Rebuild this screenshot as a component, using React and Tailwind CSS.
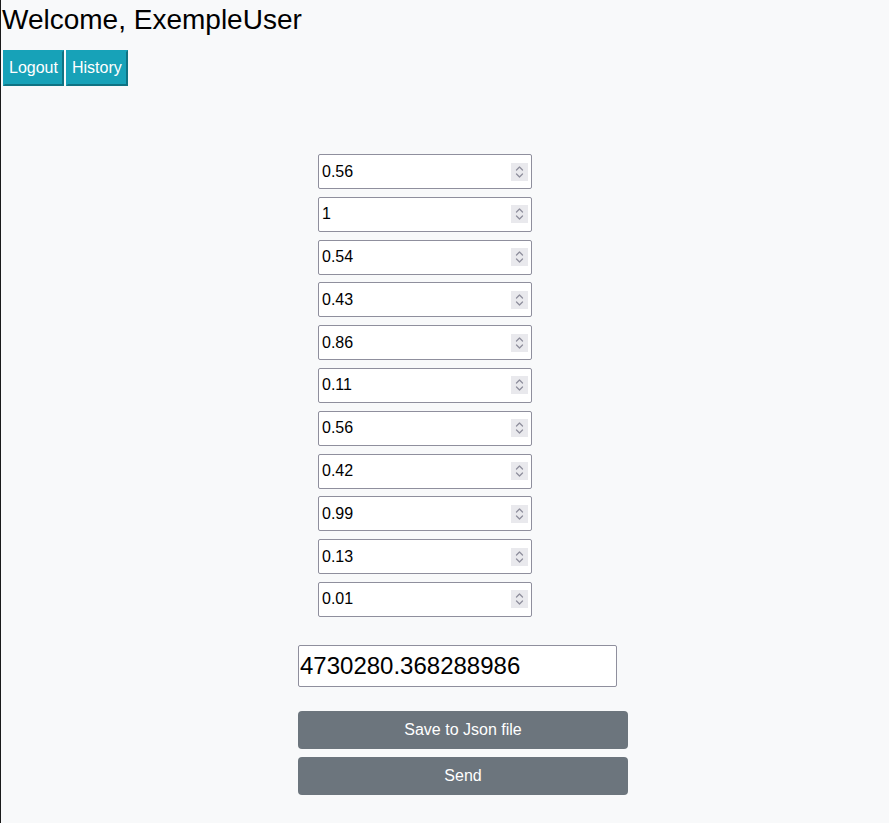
import { useState } from 'react'

const valeursInitiales = ['0.56', '1', '0.54', '0.43', '0.86', '0.11', '0.56', '0.42', '0.99', '0.13', '0.01']

function Spinner() {
  return (
    <span className="flex h-[18px] w-[17px] shrink-0 items-center justify-center bg-[#e9e9ed]">
      <svg width="9" height="14" viewBox="0 0 9 14" fill="none" stroke="#8f8f9d" strokeWidth="1.3" strokeLinecap="round" strokeLinejoin="round">
        <path d="M1.5 5 L4.5 2 L7.5 5" />
        <path d="M1.5 9 L4.5 12 L7.5 9" />
      </svg>
    </span>
  )
}

function ChampNombre({ valeur, onChange }) {
  return (
    <div className="mb-[7.8px] ml-[20px] flex h-[35px] w-[214px] items-center rounded-[2px] border border-[#8f8f9d] bg-white pr-[3px]">
      <input
        type="text"
        value={valeur}
        onChange={(e) => onChange(e.target.value)}
        className="min-w-0 flex-1 bg-transparent pl-[3px] text-[16px] text-black outline-none"
      />
      <Spinner />
    </div>
  )
}

export default function App() {
  const [valeurs, setValeurs] = useState(valeursInitiales)

  const majValeur = (i, v) => {
    const copie = [...valeurs]
    copie[i] = v
    setValeurs(copie)
  }

  return (
    <main className="min-h-[823px] border-l border-[#1a1a1a] bg-[#f8f9fa] font-['Liberation_Sans',Arial,sans-serif] text-black">
      <h2 className="pl-[1px] pt-[4px] text-[28px] leading-[32px]">Welcome, ExempleUser</h2>

      <div className="mt-[14px] flex gap-[2px] pl-[2px]">
        <button className="border-2 border-[#17a2b8] border-b-[#0f7383] border-r-[#0f7383] bg-[#17a2b8] px-[4px] py-[7px] text-[16px] leading-[18px] text-white">
          Logout
        </button>
        <button className="border-2 border-[#17a2b8] border-b-[#0f7383] border-r-[#0f7383] bg-[#17a2b8] px-[4px] py-[7px] text-[16px] leading-[18px] text-white">
          History
        </button>
      </div>

      <section className="ml-[297px] mt-[68px] w-[330px] pb-[28px]">
        {valeurs.map((v, i) => (
          <ChampNombre key={i} valeur={v} onChange={(nv) => majValeur(i, nv)} />
        ))}

        <input
          type="text"
          defaultValue="4730280.368288986"
          className="mt-[28px] block h-[42px] w-[319px] rounded-[2px] border border-[#8f8f9d] bg-white pl-[1px] text-[24px] text-black outline-none"
        />

        <button className="mt-[24px] block h-[38px] w-[330px] rounded bg-[#6c757d] text-[16px] text-white">
          Save to Json file
        </button>
        <button className="mt-[8px] block h-[38px] w-[330px] rounded bg-[#6c757d] text-[16px] text-white">
          Send
        </button>
      </section>
    </main>
  )
}
